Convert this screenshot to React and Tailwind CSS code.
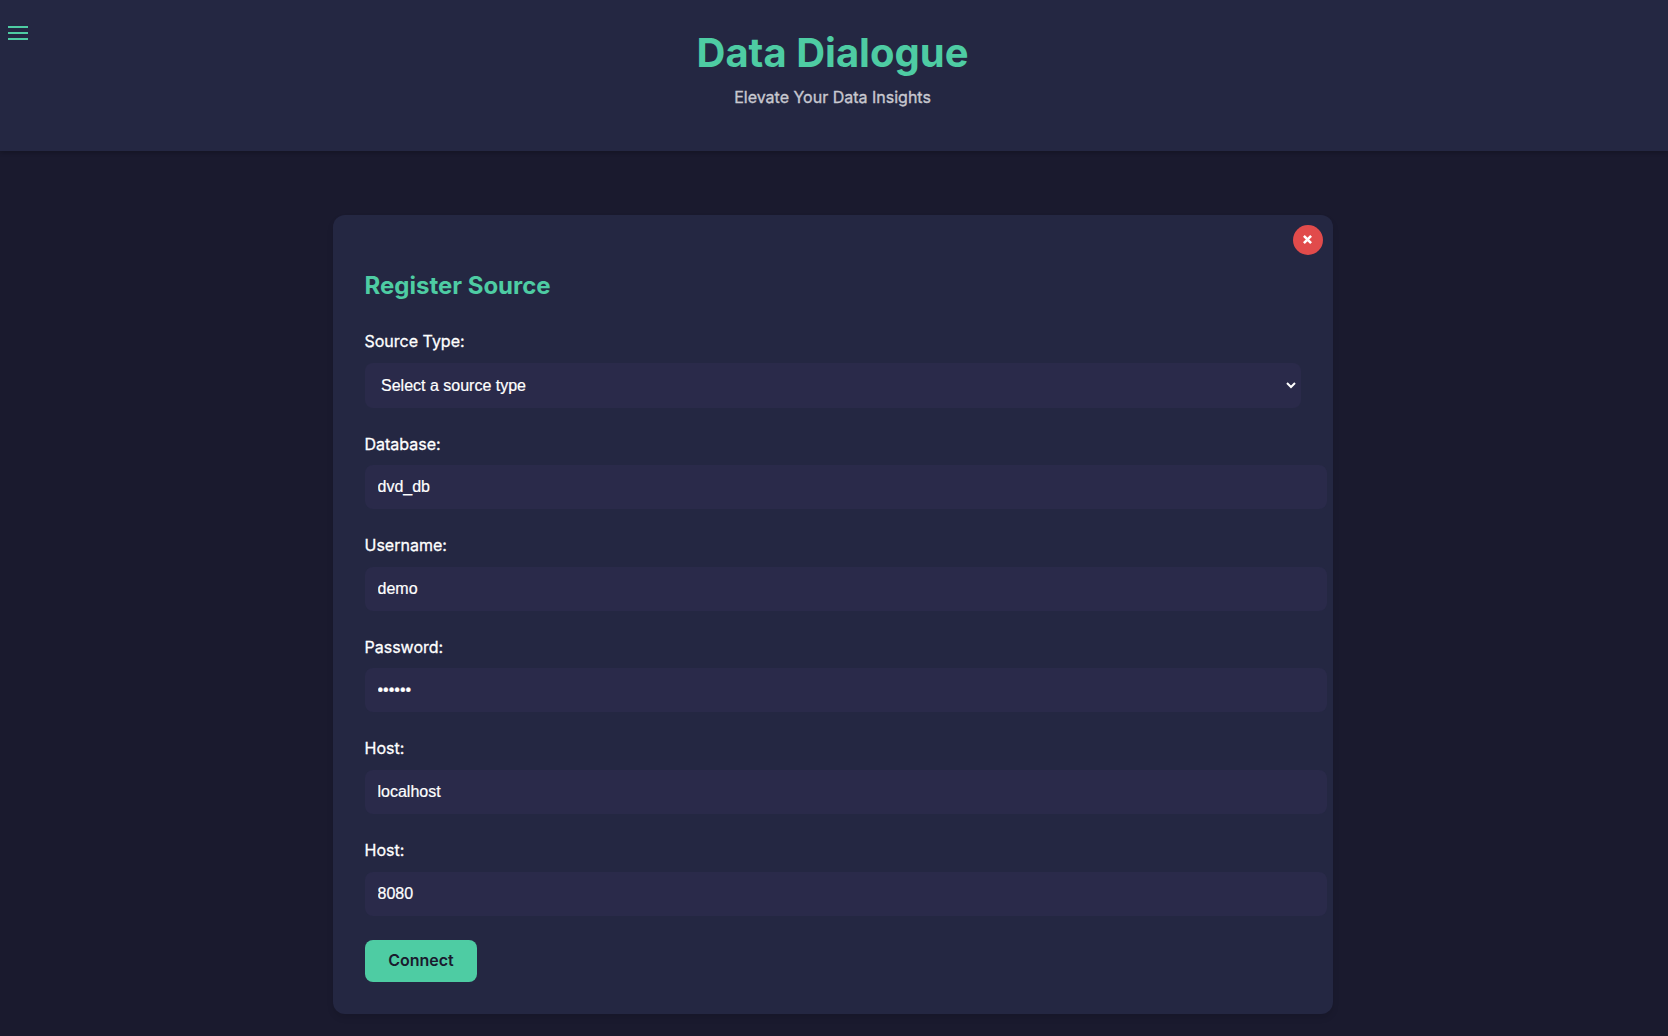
const inputs = [
  { label: "Database:", type: "text", value: "dvd_db" },
  { label: "Username:", type: "text", value: "demo" },
  { label: "Password:", type: "password", value: "secret" },
  { label: "Host:", type: "text", value: "localhost" },
  { label: "Host:", type: "text", value: "8080" },
];

export default function App() {
  return (
    <div className="h-[1036px] overflow-hidden bg-[#1a1a2e] font-['Inter',sans-serif] text-base leading-[25.6px] text-white">
      <header className="relative flex h-[151px] flex-col items-center bg-[#242742] pr-[3px] pt-8 shadow-[0_2px_4px_rgba(0,0,0,0.2)]">
        <button aria-label="Menu" className="absolute left-2 top-[26px] flex w-5 flex-col gap-1">
          <span className="h-[2px] w-full bg-[#4ecca3]" />
          <span className="h-[2px] w-full bg-[#4ecca3]" />
          <span className="h-[2px] w-full bg-[#4ecca3]" />
        </button>
        <h1 className="text-[40px] font-bold leading-[42px] text-[#4ecca3]">Data Dialogue</h1>
        <p className="mt-[11px] text-[#c8c8d0] [-webkit-text-stroke:0.35px_#c8c8d0]">Elevate Your Data Insights</p>
      </header>
      <main className="relative ml-[333px] mt-16 h-[799px] w-[1000px] rounded-xl bg-[#242742] px-8 pt-[52px] shadow-[0_4px_6px_rgba(0,0,0,0.1)]">
        <button aria-label="Close" className="absolute right-[10px] top-[10px] flex size-[30px] items-center justify-center rounded-full bg-[#e14b4b] pb-px pr-px">
          <svg viewBox="0 0 10 10" className="size-[9px]" stroke="white" strokeWidth="2.8"><path d="M1 1L9 9M9 1L1 9" /></svg>
        </button>
        <h2 className="-ml-[0.5px] text-2xl font-bold leading-[38px] text-[#4ecca3]">Register Source</h2>
        <form>
          <label className="-ml-[0.5px] mt-6 block [-webkit-text-stroke:0.3px_white]">Source Type:</label>
          <select className="mt-2 block h-[45px] w-full rounded-lg border border-r-2 border-transparent bg-[#2a2a4a] pl-[11px] pr-3 font-['Liberation_Sans',sans-serif] [-webkit-text-stroke:0.2px_white]">
            <option>Select a source type</option>
          </select>
          {inputs.map((field, i) => (
            <div key={i} className="mt-6">
              <label className="-ml-[0.5px] block [-webkit-text-stroke:0.3px_white]">{field.label}</label>
              <input
                type={field.type}
                defaultValue={field.value}
                className="mt-2 block h-11 w-[962px] rounded-lg bg-[#2a2a4a] pl-[12.5px] pr-3 font-['Liberation_Sans',sans-serif] [-webkit-text-stroke:0.2px_white]"
              />
            </div>
          ))}
          <button type="button" className="mt-6 h-[42px] w-28 rounded-lg bg-[#4ecca3] font-semibold text-[#1a1a2e]">Connect</button>
        </form>
      </main>
    </div>
  );
}
